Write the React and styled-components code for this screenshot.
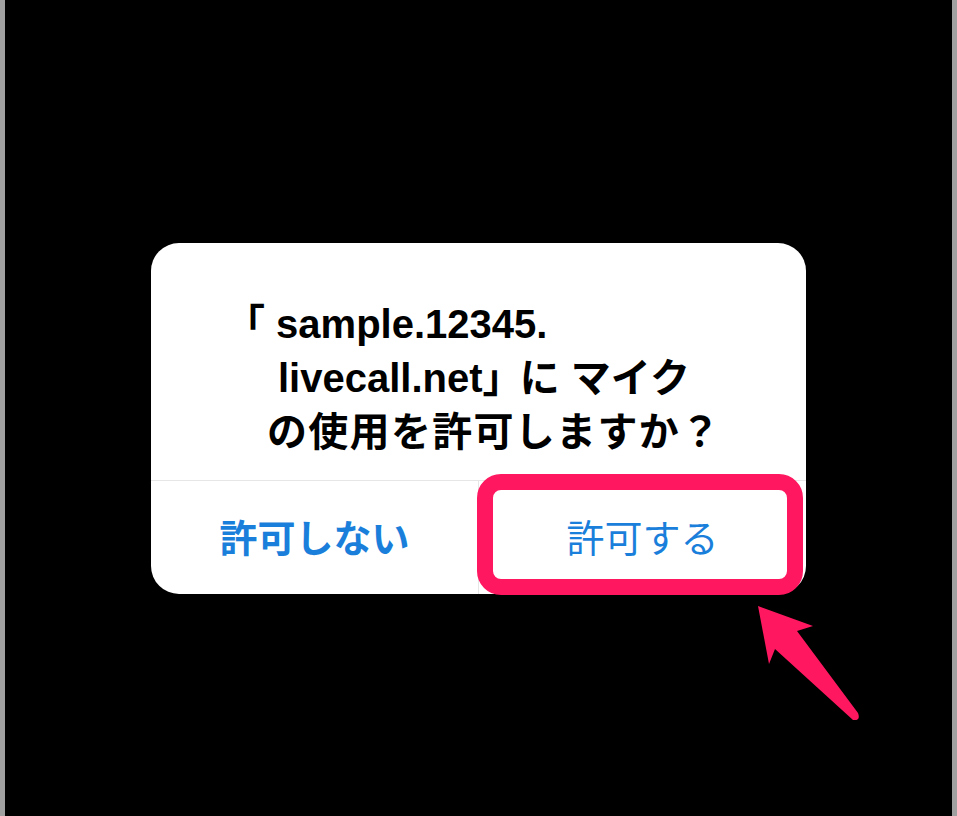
import React from "react";
import styled, { createGlobalStyle } from "styled-components";

const GlobalStyle = createGlobalStyle`
  html, body {
    margin: 0;
    padding: 0;
    background: #000;
  }
  * {
    box-sizing: border-box;
  }
`;

const Frame = styled.div`
  position: relative;
  width: 957px;
  height: 816px;
  background: #000;
  border-left: 5px solid #a0a0a0;
  border-right: 5px solid #a0a0a0;
  display: flex;
  flex-direction: column;
  align-items: center;
  padding-top: 243px;
  overflow: hidden;
`;

const Dialog = styled.div`
  width: 655px;
  height: 351px;
  background: #fff;
  border-radius: 28px;
  display: flex;
  flex-direction: column;
`;

const Message = styled.div`
  height: 238px;
  border-bottom: 1px solid #e6e6e6;
  padding-top: 54px;
  font-family: "Liberation Sans", "Noto Sans CJK JP", sans-serif;
  font-weight: 700;
  font-size: 40px;
  color: #000;
`;

const Line = styled.div`
  line-height: 54px;
  white-space: nowrap;
  padding-left: ${(p) => p.$indent}px;
  letter-spacing: ${(p) => p.$spacing || 0}px;
`;

const Bracket = styled.span`
  letter-spacing: -14px;
`;

const Actions = styled.div`
  flex: 1;
  display: grid;
  grid-template-columns: 327px 1fr;
`;

const Action = styled.button`
  position: relative;
  border: none;
  background: transparent;
  padding: 0;
  font-family: "Noto Sans CJK JP", sans-serif;
  font-size: 38px;
  font-weight: ${(p) => (p.$bold ? 700 : 400)};
  color: #1a7fdb;
  display: flex;
  align-items: center;
  justify-content: center;
  padding-bottom: 4px;
  border-left: ${(p) => (p.$divider ? "1px solid #e6e6e6" : "none")};
  cursor: pointer;
`;

const Highlight = styled.span`
  position: absolute;
  left: -2px;
  top: -7px;
  right: 3px;
  bottom: -1px;
  border: 16px solid #ff1760;
  border-radius: 24px;
  pointer-events: none;
`;

const Arrow = styled.svg`
  position: absolute;
  left: 740px;
  top: 600px;
  width: 120px;
  height: 130px;
`;

export default function App() {
  return (
    <>
      <GlobalStyle />
      <Frame>
        <Dialog>
          <Message>
            <Line $indent={74}>「 sample.12345.</Line>
            <Line $indent={127}>
              livecall.net<Bracket>」</Bracket> に マイク
            </Line>
            <Line $indent={116} $spacing={1.3}>
              の使用を許可しますか？
            </Line>
          </Message>
          <Actions>
            <Action $bold>許可しない</Action>
            <Action $divider>
              許可する
              <Highlight />
            </Action>
          </Actions>
        </Dialog>
        <Arrow viewBox="740 600 120 130">
          <path
            d="M753 606 L808 626 L792 631 L853 713 Q856 721 848 720 L770 649 L764 664 Z"
            fill="#ff1760"
          />
        </Arrow>
      </Frame>
    </>
  );
}
